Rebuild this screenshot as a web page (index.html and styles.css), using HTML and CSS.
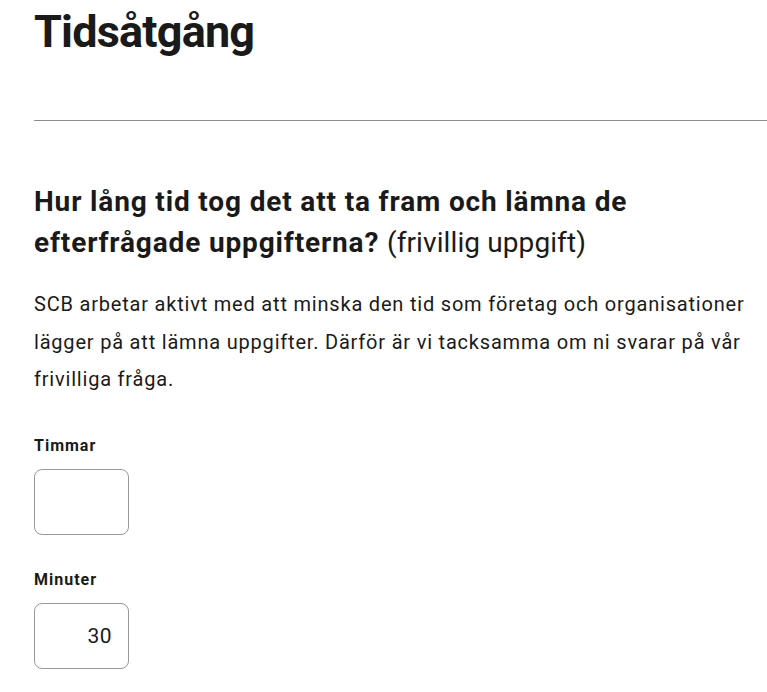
FILE: index.html
```html
<!DOCTYPE html>
<html lang="sv">
<head>
<meta charset="utf-8">
<title>Tidsåtgång</title>
<link rel="stylesheet" href="styles.css">
</head>
<body>
<main class="page">
  <h1 class="title">Tidsåtgång</h1>
  <hr class="divider">
  <section class="question">
    <h2 class="q-heading">Hur lång tid tog det att ta fram och lämna de efterfrågade uppgifterna? <span class="optional">(frivillig uppgift)</span></h2>
    <p class="q-text">SCB arbetar aktivt med att minska den tid som företag och organisationer lägger på att lämna uppgifter. Därför är vi tacksamma om ni svarar på vår frivilliga fråga.</p>
    <div class="field">
      <label class="field-label" for="timmar">Timmar</label>
      <input class="field-input" id="timmar" type="text" value="">
    </div>
    <div class="field">
      <label class="field-label" for="minuter">Minuter</label>
      <input class="field-input" id="minuter" type="text" value="30">
    </div>
  </section>
</main>
</body>
</html>
```
FILE: styles.css
```css
html, body {
  margin: 0;
  padding: 0;
  background: #fff;
}
body {
  font-family: Roboto, "Liberation Sans", Arial, sans-serif;
  color: #1a1a1a;
}
.page {
  padding-left: 34px;
}
.title {
  margin: 0;
  padding-top: 6px;
  font-size: 45px;
  font-weight: 700;
  line-height: 52px;
  letter-spacing: -0.8px;
}
.divider {
  margin: 62px 0 0 0;
  border: 0;
  border-top: 1px solid #8c8c8c;
  height: 0;
}
.question {
  padding-top: 60px;
}
.q-heading {
  margin: 0;
  font-size: 28px;
  font-weight: 700;
  line-height: 41px;
  letter-spacing: 0.85px;
}
.optional {
  font-weight: 400;
  letter-spacing: 0.1px;
}
.q-text {
  margin: 23px 0 0 0;
  font-size: 20px;
  line-height: 37.5px;
  letter-spacing: 0.8px;
}
.field {
  display: flex;
  flex-direction: column;
  align-items: flex-start;
  margin-top: 37px;
}
.field + .field {
  margin-top: 35px;
}
.field-label {
  font-size: 16px;
  font-weight: 700;
  line-height: 20px;
  letter-spacing: 1px;
}
.field-input {
  margin-top: 13px;
  box-sizing: border-box;
  width: 95px;
  height: 66px;
  border: 1px solid #999;
  border-radius: 8px;
  padding: 0 16px 0 10px;
  font-family: Roboto, "Liberation Sans", Arial, sans-serif;
  font-size: 21px;
  letter-spacing: 0.5px;
  color: #1a1a1a;
  text-align: right;
  background: #fff;
  outline: none;
}
```
